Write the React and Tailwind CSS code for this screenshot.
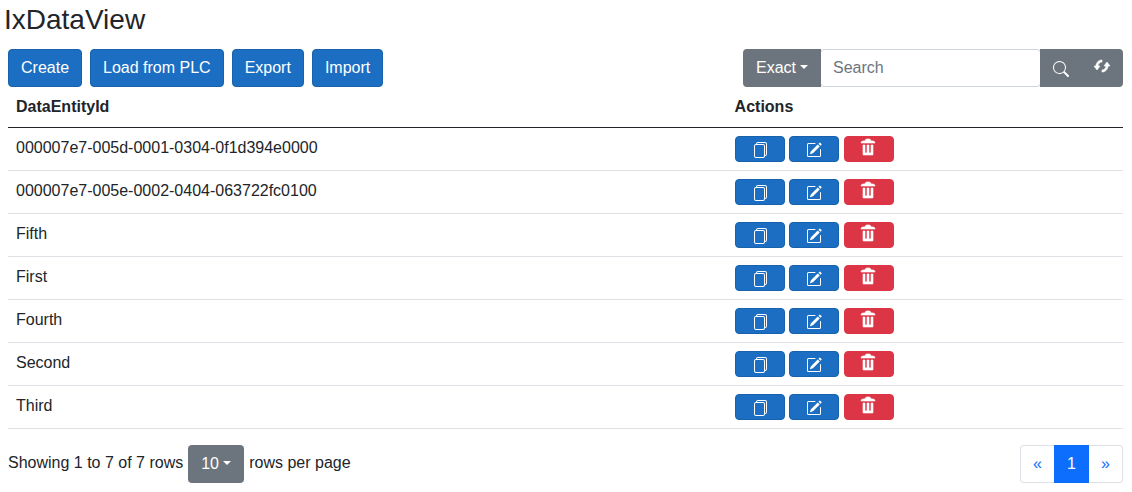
import { BsFiles, BsPencilSquare, BsSearch } from 'react-icons/bs';

const rows = [
  '000007e7-005d-0001-0304-0f1d394e0000',
  '000007e7-005e-0002-0404-063722fc0100',
  'Fifth',
  'First',
  'Fourth',
  'Second',
  'Third',
];

const toolbar = ['Create', 'Load from PLC', 'Export', 'Import'];

function TrashIcon() {
  return (
    <svg
      viewBox="0 0 8 8"
      width="16"
      height="16"
      fill="currentColor"
      stroke="currentColor"
      strokeWidth="0.3"
      overflow="visible"
      aria-hidden="true"
    >
      <path d="M3 0c-.55 0-1 .45-1 1h-1c-.55 0-1 .45-1 1h7c0-.55-.45-1-1-1h-1c0-.55-.45-1-1-1h-1zm-2 3v4.81c0 .11.08.19.19.19h4.63c.11 0 .19-.08.19-.19v-4.81h-1v3.5c0 .28-.22.5-.5.5s-.5-.22-.5-.5v-3.5h-1v3.5c0 .28-.22.5-.5.5s-.5-.22-.5-.5v-3.5h-1z" />
    </svg>
  );
}

function LoopIcon() {
  return (
    <svg
      viewBox="0 0 8 8"
      width="16"
      height="16"
      fill="currentColor"
      stroke="currentColor"
      strokeWidth="0.3"
      overflow="visible"
      aria-hidden="true"
    >
      <path
        transform="translate(0 1)"
        d="M4 0c-1.65 0-3 1.35-3 3h-1l1.5 2 1.5-2h-1c0-1.11.89-2 2-2v-1zm2.5 1l-1.5 2h1c0 1.11-.89 2-2 2v1c1.65 0 3-1.35 3-3h1l-1.5-2z"
      />
    </svg>
  );
}

function Dropdown({ label, options, className, selectClassName }) {
  return (
    <span className={`relative inline-block text-white ${className}`}>
      <select
        aria-label={label}
        className={`h-[38px] w-full appearance-none bg-[#6c757d] pl-[13px] pr-6 ${selectClassName}`}
      >
        {options.map((option) => (
          <option key={option}>{option}</option>
        ))}
      </select>
      <span className="pointer-events-none absolute right-[13px] top-4 border-x-4 border-t-4 border-x-transparent border-t-white" />
    </span>
  );
}

function ActionButton({ label, className, children }) {
  return (
    <button
      type="button"
      aria-label={label}
      className={`inline-flex h-[26px] w-[50px] justify-center rounded border align-top text-white ${className}`}
    >
      {children}
    </button>
  );
}

export default function App() {
  return (
    <main className="bg-white px-2 pt-0.5 font-['Liberation_Sans',Arial,sans-serif] text-base text-[#212529]">
      <h1 className="-ml-1 mb-3 text-[28px] leading-[35px]">IxDataView</h1>

      <div className="mr-px flex items-start justify-between">
        <div className="flex gap-2">
          {toolbar.map((label) => (
            <button
              key={label}
              type="button"
              className="h-[38px] rounded border border-[#1861ac] bg-[#1b6ec2] px-3 text-white"
            >
              {label}
            </button>
          ))}
        </div>

        <div className="flex">
          <Dropdown
            label="Search mode"
            options={['Exact', 'Contains', 'Starts with']}
            className="w-[78px]"
            selectClassName="rounded-l"
          />
          <input
            type="text"
            aria-label="Search"
            placeholder="Search"
            className="-ml-px h-[38px] w-[221px] rounded border border-[#ced4da] bg-white px-3 placeholder:text-[#6c757d]"
          />
          <button
            type="button"
            aria-label="Run search"
            className="-ml-px flex h-[38px] w-[42px] justify-center bg-[#6c757d] pt-3 text-white"
          >
            <BsSearch size={16} />
          </button>
          <button
            type="button"
            aria-label="Refresh"
            className="flex h-[38px] w-[41px] justify-center rounded-r bg-[#6c757d] pr-0.5 pt-[9px] text-white"
          >
            <LoopIcon />
          </button>
        </div>
      </div>

      <div className="mr-px">
        <table className="w-full table-fixed border-collapse text-left">
          <thead>
            <tr className="border-b border-[#212529]">
              <th scope="col" className="w-[64.45%] px-2 pb-2 pt-2 font-bold">DataEntityId</th>
              <th scope="col" className="px-2 pb-2 pt-2 font-bold">Actions</th>
            </tr>
          </thead>
          <tbody>
            {rows.map((id) => (
              <tr key={id} className="border-b border-[#dee2e6]">
                <td className="p-2 align-top">{id}</td>
                <td className="p-2 align-top leading-[26px]">
                  <ActionButton label={`Copy ${id}`} className="border-[#1861ac] bg-[#1b6ec2] pt-[5px]">
                    <BsFiles size={16} />
                  </ActionButton>{' '}
                  <ActionButton label={`Edit ${id}`} className="border-[#1861ac] bg-[#1b6ec2] pt-[5px]">
                    <BsPencilSquare size={16} />
                  </ActionButton>{' '}
                  <ActionButton label={`Delete ${id}`} className="border-[#dc3545] bg-[#dc3545] pt-0.5">
                    <TrashIcon />
                  </ActionButton>
                </td>
              </tr>
            ))}
          </tbody>
        </table>
      </div>

      <footer className="mr-px flex items-start justify-between pt-4">
        <div className="flex gap-[5px]">
          <span className="pt-1.5">Showing 1 to 7 of 7 rows</span>
          <Dropdown
            label="Rows per page"
            options={['10', '20', '50']}
            className="w-14"
            selectClassName="rounded"
          />
          <span className="pt-1.5">rows per page</span>
        </div>

        <nav aria-label="Pages" className="flex text-[#0d6efd]">
          <a
            href="#previous"
            aria-label="Previous"
            className="flex h-[38px] w-[34px] items-center justify-center rounded-l border border-r-0 border-[#dee2e6]"
          >
            «
          </a>
          <a
            href="#page-1"
            aria-current="page"
            className="flex h-[38px] w-[35px] items-center justify-center bg-[#0d6efd] text-white"
          >
            1
          </a>
          <a
            href="#next"
            aria-label="Next"
            className="flex h-[38px] w-[34px] items-center justify-center rounded-r border border-l-0 border-[#dee2e6]"
          >
            »
          </a>
        </nav>
      </footer>
    </main>
  );
}
